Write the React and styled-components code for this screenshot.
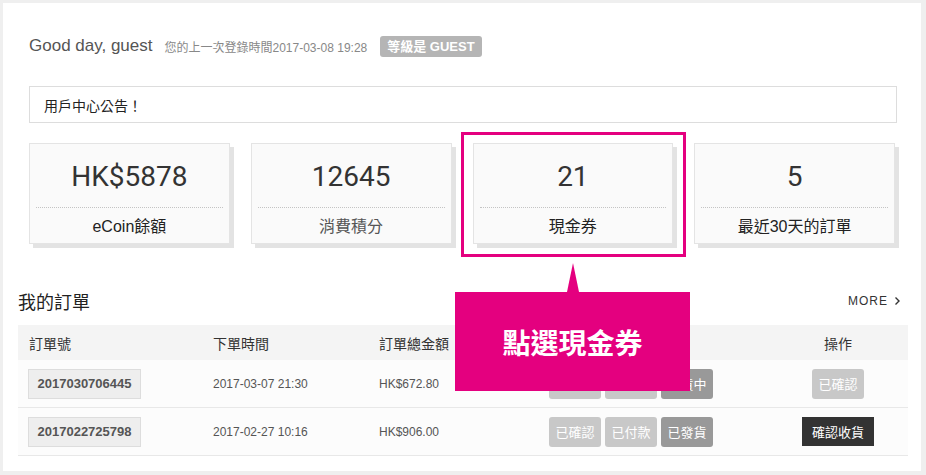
import React from 'react';
import styled, { createGlobalStyle } from 'styled-components';

const pink = '#e4007f';

const GlobalStyle = createGlobalStyle`
  body {
    margin: 0;
    font-family: "Liberation Sans", "Noto Sans CJK TC", sans-serif;
    color: #333;
  }
  * { box-sizing: border-box; }
`;

const Frame = styled.div`
  width: 926px;
  height: 475px;
  overflow: hidden;
  background: #efefef;
  padding: 3px 5px 4px 3px;
`;

const Panel = styled.div`
  position: relative;
  height: 100%;
  background: #fff;
  padding: 32px 13px 0 15px;
`;

const Top = styled.div`
  margin: 0 11px;
`;

const Greeting = styled.div`
  display: flex;
  align-items: center;
  height: 22px;
`;

const Hello = styled.span`
  font-size: 17px;
  color: #555;
`;

const LastLogin = styled.span`
  font-size: 12px;
  color: #888;
  margin-left: 12px;
`;

const Level = styled.span`
  margin-left: 13px;
  height: 21px;
  line-height: 21px;
  padding: 0 7px;
  background: #b5b5b5;
  color: #fff;
  border-radius: 3px;
  font-size: 13px;
  font-weight: bold;
`;

const Notice = styled.div`
  margin-top: 29px;
  height: 37px;
  border: 1px solid #ddd;
  padding-left: 14px;
  display: flex;
  align-items: center;
  font-size: 14px;
  color: #222;
`;

const Stats = styled.div`
  margin: 20px 2px 0 0;
  display: grid;
  grid-template-columns: repeat(4, 1fr);
  gap: 21px;
`;

const Card = styled.div`
  position: relative;
  height: 101px;
  background: #fafafa;
  border: 1px solid #e4e4e4;
  box-shadow: 4px 4px 0 #e3e3e3;
  display: flex;
  flex-direction: column;

  ${p => p.$highlight && `
    &::before {
      content: '';
      position: absolute;
      top: -12px;
      left: -13px;
      right: -14px;
      bottom: -14px;
      border: 3px solid ${pink};
    }
  `}
`;

const Value = styled.div`
  height: 63px;
  display: flex;
  align-items: center;
  justify-content: center;
  font-family: Roboto, "Liberation Sans", sans-serif;
  font-size: 28px;
  color: #333;
  padding-top: 2px;
`;

const Dots = styled.div`
  margin: 0 6px;
  border-top: 1px dotted #c4c4c4;
`;

const Label = styled.div`
  flex: 1;
  display: flex;
  align-items: center;
  justify-content: center;
  font-size: 16px;
  color: ${p => p.$soft ? '#555' : '#222'};
  padding-bottom: 2px;
`;

const OrdersHead = styled.div`
  margin-top: 44px;
  height: 26px;
  display: flex;
  align-items: center;
  justify-content: space-between;
`;

const Title = styled.h2`
  margin: 0;
  font-size: 18px;
  font-weight: normal;
  color: #222;
`;

const More = styled.span`
  display: flex;
  align-items: center;
  gap: 6px;
  font-size: 12px;
  letter-spacing: 1px;
  color: #333;
  margin-right: 7px;
`;

const Table = styled.div`
  margin-top: 11px;
`;

const Row = styled.div`
  display: grid;
  grid-template-columns: 184px 166px 170px 230px 140px;
  align-items: center;
  height: ${p => p.$head ? '35px' : '48px'};
  background: ${p => p.$head ? '#f4f4f4' : '#fcfcfc'};
  border-bottom: ${p => p.$head ? 'none' : '1px solid #e8e8e8'};
`;

const Cell = styled.div`
  padding-left: ${p => p.$center ? '0' : '11px'};
  font-size: ${p => p.$head ? '14px' : '12px'};
  color: ${p => p.$head ? '#333' : '#555'};
  display: flex;
  gap: 4px;
  justify-content: ${p => p.$center ? 'center' : 'flex-start'};
`;

const OrderNo = styled.span`
  display: inline-flex;
  align-items: center;
  justify-content: center;
  width: 113px;
  height: 30px;
  margin-left: -1px;
  background: #eee;
  border: 1px solid #ddd;
  font-size: 13px;
  font-weight: bold;
  color: #555;
`;

const Tag = styled.span`
  display: inline-flex;
  align-items: center;
  justify-content: center;
  width: 52px;
  height: 30px;
  border-radius: 3px;
  background: ${p => p.$dark ? '#999' : '#c8c8c8'};
  color: #fff;
  font-size: 13px;
`;

const Confirm = styled.span`
  display: inline-flex;
  align-items: center;
  justify-content: center;
  width: 72px;
  height: 29px;
  background: #333;
  color: #fff;
  font-size: 13px;
`;

const Callout = styled.div`
  position: absolute;
  left: 452px;
  top: 289px;
  width: 235px;
  height: 99px;
  background: ${pink};
  color: #fff;
  font-size: 28px;
  font-weight: bold;
  display: flex;
  align-items: center;
  justify-content: center;

  &::before {
    content: '';
    position: absolute;
    left: 50%;
    top: -29px;
    margin-left: -6px;
    border-left: 6px solid transparent;
    border-right: 6px solid transparent;
    border-bottom: 29px solid ${pink};
  }
`;

const stats = [
  { value: 'HK$5878', label: 'eCoin餘額' },
  { value: '12645', label: '消費積分', soft: true },
  { value: '21', label: '現金券', highlight: true },
  { value: '5', label: '最近30天的訂單' },
];

const orders = [
  {
    no: '2017030706445', time: '2017-03-07 21:30', total: 'HK$672.80',
    status: [['已確認'], ['已付款'], ['備貨中', true]], action: 'done',
  },
  {
    no: '2017022725798', time: '2017-02-27 10:16', total: 'HK$906.00',
    status: [['已確認'], ['已付款'], ['已發貨', true]], action: 'receive',
  },
];

const Chevron = () => (
  <svg width="7" height="10" viewBox="0 0 7 10" fill="none">
    <path d="M1.5 1.5 L5 5 L1.5 8.5" stroke="#333" strokeWidth="1.4" />
  </svg>
);

export default function App() {
  return (
    <>
      <GlobalStyle />
      <Frame>
        <Panel>
          <Top>
            <Greeting>
              <Hello>Good day, guest</Hello>
              <LastLogin>您的上一次登錄時間2017-03-08 19:28</LastLogin>
              <Level>等級是 GUEST</Level>
            </Greeting>
            <Notice>用戶中心公告！</Notice>
            <Stats>
              {stats.map(s => (
                <Card key={s.label} $highlight={s.highlight}>
                  <Value>{s.value}</Value>
                  <Dots />
                  <Label $soft={s.soft}>{s.label}</Label>
                </Card>
              ))}
            </Stats>
          </Top>

          <OrdersHead>
            <Title>我的訂單</Title>
            <More>MORE <Chevron /></More>
          </OrdersHead>

          <Table>
            <Row $head>
              <Cell $head>訂單號</Cell>
              <Cell $head>下單時間</Cell>
              <Cell $head>訂單總金額</Cell>
              <Cell $head>訂單狀態</Cell>
              <Cell $head $center>操作</Cell>
            </Row>
            {orders.map(o => (
              <Row key={o.no}>
                <Cell><OrderNo>{o.no}</OrderNo></Cell>
                <Cell>{o.time}</Cell>
                <Cell>{o.total}</Cell>
                <Cell>
                  {o.status.map(([t, dark]) => (
                    <Tag key={t} $dark={dark}>{t}</Tag>
                  ))}
                </Cell>
                <Cell $center>
                  {o.action === 'done' ? <Tag>已確認</Tag> : <Confirm>確認收貨</Confirm>}
                </Cell>
              </Row>
            ))}
          </Table>

          <Callout>點選現金券</Callout>
        </Panel>
      </Frame>
    </>
  );
}
